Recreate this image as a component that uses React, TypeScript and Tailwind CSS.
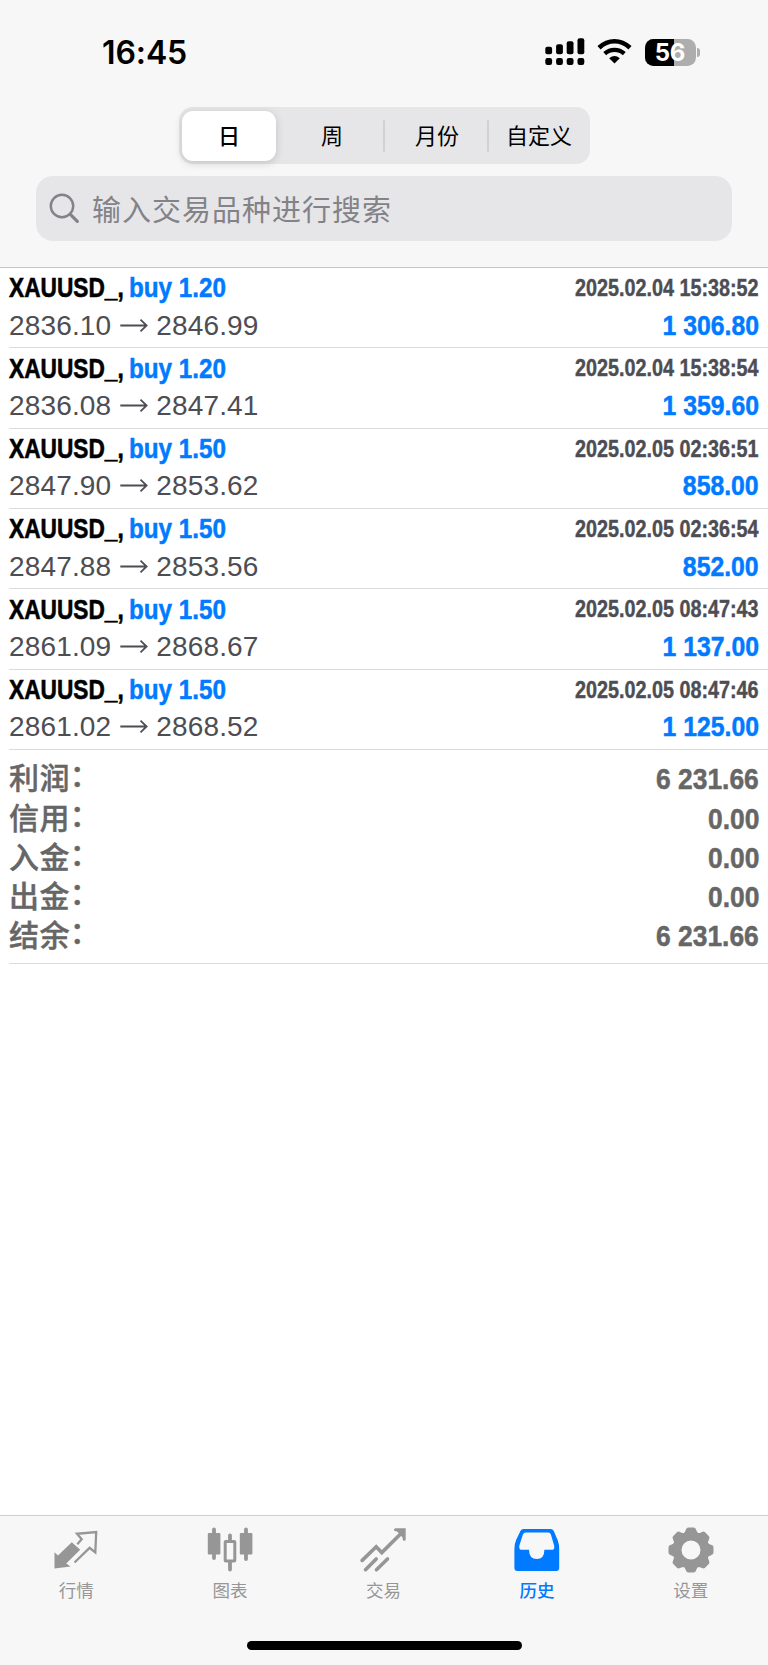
import React from 'react';
import clsx from 'clsx';

const deals = [
  { volume: '1.20', open: '2836.10', close: '2846.99', time: '2025.02.04 15:38:52', profit: '1 306.80' },
  { volume: '1.20', open: '2836.08', close: '2847.41', time: '2025.02.04 15:38:54', profit: '1 359.60' },
  { volume: '1.50', open: '2847.90', close: '2853.62', time: '2025.02.05 02:36:51', profit: '858.00' },
  { volume: '1.50', open: '2847.88', close: '2853.56', time: '2025.02.05 02:36:54', profit: '852.00' },
  { volume: '1.50', open: '2861.09', close: '2868.67', time: '2025.02.05 08:47:43', profit: '1 137.00' },
  { volume: '1.50', open: '2861.02', close: '2868.52', time: '2025.02.05 08:47:46', profit: '1 125.00' },
];

const summary = [
  { label: '利润', value: '6 231.66' },
  { label: '信用', value: '0.00' },
  { label: '入金', value: '0.00' },
  { label: '出金', value: '0.00' },
  { label: '结余', value: '6 231.66' },
];

const QuotesIcon = () => (
  <svg width="46" height="46" viewBox="0 0 46 46" fill="none">
    <path d="M1.5 41.5V25.3L5 28.6L18.8 15.2L27.2 22.8L13.2 36.4L17.6 39.6Z" fill="#969696" />
    <path d="M24.3 17.3L28.7 12.3L24 6.8L43.2 5L42.3 25.5L36.6 20.9L21.5 35.5" stroke="#969696" strokeWidth="2.3" />
  </svg>
);

const ChartIcon = () => (
  <svg width="46" height="46" viewBox="0 0 46 46" fill="none" stroke="#969696">
    <path d="M7 2.5V31M39 2.5V32" strokeWidth="3.8" strokeLinecap="round" />
    <path d="M23 8.5V14M23 35V42.5" strokeWidth="3.8" strokeLinecap="round" />
    <rect x="0.8" y="6" width="12.6" height="21.4" rx="1" fill="#969696" stroke="none" />
    <rect x="32.8" y="6" width="12.6" height="21.4" rx="1" fill="#969696" stroke="none" />
    <rect x="18.2" y="14.5" width="9.6" height="19.6" rx="0.6" strokeWidth="3" fill="#f7f7f7" />
  </svg>
);

const TradeIcon = () => (
  <svg width="46" height="46" viewBox="0 0 46 46" fill="none" stroke="#969696" strokeWidth="3.6" strokeLinecap="round">
    <path d="M2.2 33.4L16.2 19.7L21.8 25.6L40.5 7" />
    <path d="M5.5 42.7L16.2 32M16.5 42.7L27.5 32" />
    <path d="M35.5 2.8H44.2V12.3" fill="#969696" strokeLinejoin="miter" strokeWidth="3" />
  </svg>
);

const HistoryIcon = () => (
  <svg width="46" height="46" viewBox="0 0 46 46">
    <path
      fillRule="evenodd"
      fill="#007aff"
      d="M9.5 2.1H36.5Q38.8 2.1 39.8 4L43.8 13.4Q45.2 17.5 45.2 21.5V41Q45.2 44 42.2 44H3.4Q0.4 44 0.4 41V21.5Q0.6 16.5 2.2 12.8L6.4 4Q7.4 2.1 9.5 2.1ZM11.5 5.5Q9.8 5.5 9 7.3L5.3 18.8Q5 22.8 7 22.8H15Q15 32 22.8 32Q30.4 32 30.4 22.8H38.6Q40.6 22.8 40.2 18.8L36.8 7.3Q36 5.5 34.4 5.5Z"
    />
  </svg>
);

const SettingsIcon = () => (
  <svg width="46" height="46" viewBox="-23 -23 46 46">
    <g fill="#969696">
      {[0, 45, 90, 135, 180, 225, 270, 315].map((deg) => (
        <path key={deg} transform={`rotate(${deg})`} d="M-9 -15Q-5.5 -18 -5 -20.6Q-4.5 -22.5 -2.6 -22.5H2.6Q4.5 -22.5 5 -20.6Q5.5 -18 9 -15Z" />
      ))}
    </g>
    <circle r="13.8" fill="none" stroke="#969696" strokeWidth="8.6" />
  </svg>
);

const tabs = [
  { label: '行情', icon: <QuotesIcon />, active: false },
  { label: '图表', icon: <ChartIcon />, active: false },
  { label: '交易', icon: <TradeIcon />, active: false },
  { label: '历史', icon: <HistoryIcon />, active: true },
  { label: '设置', icon: <SettingsIcon />, active: false },
];

const StatusBar = () => (
  <div className="flex h-[107px] items-start justify-between pl-[102px] pr-[68px]">
    <div className="mt-[34px] font-['Inter'] text-[32px] leading-[38px] font-semibold tracking-[-0.1px]">16:45</div>
    <div className="mt-[38px] flex">
      <svg width="40" height="28" viewBox="0 0 40 28">
        <rect x="0.3" y="8.7" width="6.8" height="7.6" rx="2" />
        <rect x="11.1" y="6.3" width="6.8" height="10" rx="2" />
        <rect x="21.7" y="3.2" width="6.8" height="13.1" rx="2" />
        <rect x="32.5" y="0.3" width="6.8" height="16" rx="2" />
        <rect x="0.3" y="20" width="6.8" height="7" rx="2.2" />
        <rect x="11.1" y="20" width="6.8" height="7" rx="2.2" />
        <rect x="21.7" y="20" width="6.8" height="7" rx="2.2" />
        <rect x="32.5" y="20" width="6.8" height="7" rx="2.2" />
      </svg>
      <svg className="ml-[12.5px]" width="36" height="28" viewBox="0 0 36 28" fill="none" stroke="#000">
        <path d="M2 9.8Q9 3.3 17.5 3.3Q26 3.3 33 9.8" strokeWidth="4.6" />
        <path d="M7.7 15.6Q12 11.8 17.5 11.8Q23 11.8 27.3 15.6" strokeWidth="4.3" />
        <path d="M12.2 20.3Q17.5 15.6 22.8 20.3L17.5 25.6Z" fill="#000" stroke="none" />
      </svg>
      <div className="ml-[11.5px] flex items-center">
        <div className="relative h-[27px] w-[51px] overflow-hidden rounded-[8.5px] bg-[#adadad]">
          <div className="h-full w-[29px] bg-black" />
          <span className="absolute inset-0 text-center font-['Inter'] text-[24px] leading-[27px] font-bold tracking-[-0.3px] text-white">56</span>
        </div>
        <div className="ml-[1.5px] h-[9px] w-[3px] rounded-r-full bg-[#adadad]" />
      </div>
    </div>
  </div>
);

const Arrow = () => (
  <svg className="mx-[8.5px]" width="28" height="14" viewBox="0 0 28 14" fill="none" stroke="#4d4d54" strokeWidth="1.8">
    <path d="M0.3 6.5H26.5M20.5 0.7L26.6 6.5L20.5 12.3" />
  </svg>
);

const App = () => {
  return (
    <div className="flex h-[1665px] w-[768px] flex-col bg-white font-['Liberation_Sans','Noto_Sans_CJK_SC',sans-serif] text-black">
      {/* Header */}
      <div className="h-[268px] shrink-0 border-b border-[#c4c4c6] bg-[#f7f7f7]">
        <StatusBar />

        <div className="ml-[179px] flex h-[57px] w-[411px] items-center rounded-[14px] bg-[#e6e6e8] pl-[3px] font-['Noto_Sans_CJK_SC'] text-[22px]">
          <div className="flex h-[50px] w-[94px] items-center justify-center rounded-[11px] bg-white pb-[2px] font-medium shadow-[0_2px_8px_rgba(0,0,0,0.16)]">日</div>
          <div className="w-[107px] pb-[2px] pl-[5px] text-center">周</div>
          <div className="h-8 w-[2px] rounded bg-[#d0d0d3]" />
          <div className="w-[102px] pb-[2px] pl-[2px] text-center">月份</div>
          <div className="h-8 w-[2px] rounded bg-[#d0d0d3]" />
          <div className="w-[100px] pb-[2px] text-center">自定义</div>
        </div>

        <div className="mt-[12px] ml-[36px] flex h-[65px] w-[696px] items-center rounded-[17px] bg-[#e6e6e9] pl-[13px] text-[#828287]">
          <svg width="32" height="32" viewBox="0 0 32 32" fill="none" stroke="#828287" strokeLinecap="round">
            <circle cx="13" cy="13" r="11.2" strokeWidth="2.4" />
            <path d="M21.3 21.3L28.3 28.3" strokeWidth="3.2" />
          </svg>
          <span className="ml-[11px] pb-[2px] font-['Noto_Sans_CJK_SC'] text-[29px] leading-[40px] tracking-[1px]">输入交易品种进行搜索</span>
        </div>
      </div>

      {/* Closed deals */}
      <div className="pl-[9px]">
        {deals.map((deal) => (
          <div key={deal.time} className="h-[80.35px] border-b border-[#dcdcde] pr-[9px]">
            <div className="flex h-[40px] items-center justify-between pt-[0.5px] font-bold whitespace-nowrap">
              <div className="flex text-[28px]">
                <span className="w-[119.5px]">
                  <span className="inline-block origin-left scale-x-[0.81] [-webkit-text-stroke:0.6px]">XAUUSD_,</span>
                </span>
                <span className="inline-block origin-left scale-x-[0.865] [-webkit-text-stroke:0.5px] text-[#007aff]">buy {deal.volume}</span>
              </div>
              <span className="origin-right scale-x-[0.86] [-webkit-text-stroke:0.4px] text-[23px] text-[#4d4d54]">{deal.time}</span>
            </div>
            <div className="flex h-[35.5px] items-center justify-between">
              <div className="flex items-center text-[28px] tracking-[0.15px] text-[#4d4d54]">
                {deal.open}
                <Arrow />
                {deal.close}
              </div>
              <span className="origin-right scale-x-[0.885] [-webkit-text-stroke:0.5px] text-[28px] font-bold text-[#007aff]">{deal.profit}</span>
            </div>
          </div>
        ))}

        {/* Totals */}
        <div className="h-[214px] border-b border-[#dcdcde] pt-[9px] pr-[9px] text-[#666]">
          {summary.map((row) => (
            <div key={row.label} className="flex h-[39.3px] items-center justify-between">
              <span className="flex text-[30px] leading-[39px] font-medium tracking-[0.4px] [-webkit-text-stroke:0.4px]">
                {row.label}
                <span className="-mt-[3px]">：</span>
              </span>
              <span className="origin-right scale-x-[0.88] [-webkit-text-stroke:0.5px] text-[30px] leading-[39px] font-bold">{row.value}</span>
            </div>
          ))}
        </div>
      </div>

      {/* Tab bar */}
      <div className="mt-auto h-[150px] shrink-0 border-t border-[#cfcfd1] bg-[#f7f7f7]">
        <div className="flex h-[125px]">
          {tabs.map((tab) => (
            <div key={tab.label} className="flex flex-1 flex-col items-center pt-[11px] pr-[1px]">
              {tab.icon}
              <span
                className={clsx(
                  "mt-[4px] font-['Noto_Sans_CJK_SC'] text-[17.5px] leading-[26px]",
                  tab.active ? 'font-medium text-[#007aff]' : 'text-[#969696]',
                )}
              >
                {tab.label}
              </span>
            </div>
          ))}
        </div>
        <div className="mx-auto h-[9px] w-[275px] rounded-full bg-black" />
      </div>
    </div>
  );
};

export default App;
